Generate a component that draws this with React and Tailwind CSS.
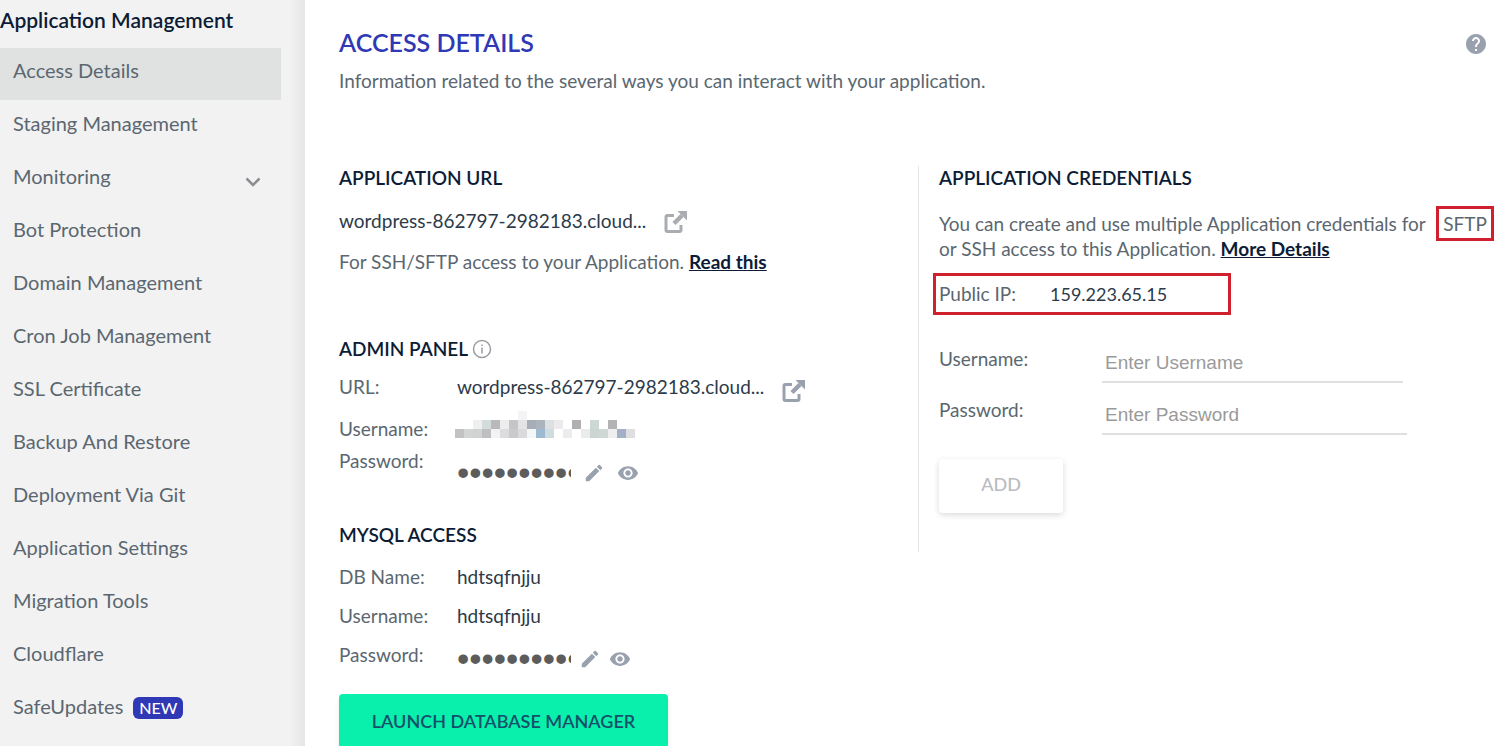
import React, { useState } from 'react';
import { MdEdit, MdRemoveRedEye, MdHelp } from 'react-icons/md';

const navLinks = [
  { name: 'Access Details', active: true },
  { name: 'Staging Management' },
  { name: 'Monitoring', expandable: true },
  { name: 'Bot Protection' },
  { name: 'Domain Management' },
  { name: 'Cron Job Management' },
  { name: 'SSL Certificate' },
  { name: 'Backup And Restore' },
  { name: 'Deployment Via Git' },
  { name: 'Application Settings' },
  { name: 'Migration Tools' },
  { name: 'Cloudflare' },
  { name: 'SafeUpdates', badge: 'NEW' },
];

// Censored username, one colour per cell
const mosaic = [
  ['', '', '', '', '', '', '', '#f4f4f4'],
  ['', '', '#eef0f0', '#d3dbdb', '#b9b9bb', '#ededee', '#c5c5c8', '#e3e3e5', '#a7adb6', '#a9b4bd', '#dedfe2', '#ebebed', '', '#b0b0b3', '', '#ccd8d3', '', '#b3b3b6'],
  ['#c2c2c4', '#d2d5d4', '#cfd4d2', '#bfbfc1', '#f2f2f2', '#dcdcde', '#cacacc', '#dadadc', '#f3f5f7', '#9dbbd0', '#cfdcdd', '', '#ececee', '', '#ebebed', '#cbd6d1', '#cfd8d4', '#eeeeef', '#a3afc4', '#dfdfe1'],
];

const Mosaic = () => (
  <svg width="180" height="27" viewBox="0 0 180 27" shapeRendering="crispEdges" role="img" aria-label="Hidden username">
    {mosaic.map((row, y) =>
      row.map((fill, x) => fill && <rect key={`${x}-${y}`} x={x * 9} y={y * 9} width="9" height="9" fill={fill} />)
    )}
  </svg>
);

const OpenIcon = () => (
  <svg width="24" height="24" viewBox="0 0 24 24" fill="none" aria-hidden="true">
    <path d="M11 5.500H4.500Q3 5.500 3 7V20Q3 21.500 4.500 21.500H16.500Q18 21.500 18 20V15" stroke="currentColor" strokeWidth="3" />
    <path d="M11 13.500L19 5.500" stroke="currentColor" strokeWidth="4.500" />
    <path d="M14.500 1H24V10.500Z" fill="currentColor" />
  </svg>
);

const InfoIcon = () => (
  <svg width="20" height="20" viewBox="0 0 20 20" fill="none" stroke="currentColor" aria-hidden="true">
    <circle cx="10" cy="10" r="8.500" strokeWidth="1.500" />
    <path d="M10 8.500V14.500M10 5.500V7" strokeWidth="1.500" />
  </svg>
);

const Chevron = () => (
  <svg width="16" height="10" viewBox="0 0 16 10" fill="none" stroke="#8a8d91" strokeWidth="2.500" className="mt-3 mr-5 ml-auto" aria-hidden="true">
    <path d="M1.500 1.500L8 8L14.500 1.500" />
  </svg>
);

const SectionTitle = ({ children }) => (
  <h2 className="flex h-6 items-center gap-1 text-[19px] font-semibold text-[#0c1c36]">{children}</h2>
);

const Row = ({ label, className, children }) => (
  <div className={`flex ${className}`}>
    <dt className="w-[118px] shrink-0">{label}</dt>
    <dd className="flex text-[#2c3a4a]">{children}</dd>
  </div>
);

const SecretValue = ({ label, className }) => {
  const [visible, setVisible] = useState(false);

  return (
    <div className={`flex h-6 items-center text-[#9aa1ae] ${className}`}>
      <input
        type={visible ? 'text' : 'password'}
        aria-label={label}
        defaultValue="aqwsedrftgyh"
        readOnly
        className={`h-6 w-[114px] font-['Liberation_Sans',Arial,sans-serif] text-[#5c5c5c] outline-none ${visible ? 'text-lg' : 'text-[35px]'}`}
      />
      <button type="button" aria-label={`Edit ${label}`}>
        <MdEdit size={22} />
      </button>
      <button type="button" aria-label={`Show ${label}`} onClick={() => setVisible(!visible)}>
        <MdRemoveRedEye size={22} />
      </button>
    </div>
  );
};

const Sidebar = () => (
  <aside className="flex w-[305px] shrink-0 flex-col bg-gradient-to-r from-[#f2f2f2] from-95% to-[#e6e6e6] pt-2 text-xl leading-6">
    <h2 className="text-[21px] leading-6 font-semibold text-[#0c1c36]">Application Management</h2>
    <nav className="mt-4 mr-6 flex flex-col gap-px">
      {navLinks.map((link) => (
        <a
          key={link.name}
          href="#"
          className={`flex h-[52px] items-center pb-2 pl-[13px] ${link.active ? 'bg-[#dfe2e1]' : ''}`}
        >
          {link.name}
          {link.badge && (
            <span className="mt-1 ml-2.5 rounded-md bg-[#2f38b5] px-1.5 text-base leading-[22px] font-medium text-white">
              {link.badge}
            </span>
          )}
          {link.expandable && <Chevron />}
        </a>
      ))}
    </nav>
  </aside>
);

const Credentials = () => (
  <section className="h-[386px] border-l border-[#e4e6e8] pl-5">
    <SectionTitle>APPLICATION CREDENTIALS</SectionTitle>
    <p className="mt-[21px] leading-[25px]">
      You can create and use multiple Application credentials for{' '}
      <span className="ml-1.5 border-3 border-[#d0202e] px-1 py-[3px]">SFTP</span>{' '}
      or SSH access to this Application.{' '}
      <a href="#" className="font-bold text-[#0c1c36] underline">More Details</a>
    </p>
    <div className="mt-3 -ml-[6px] flex h-[42px] w-[298px] items-center border-3 border-[#d0202e] pl-[3px]">
      <span className="w-[111px]">Public IP:</span>
      <span className="text-lg leading-6 text-[#2c3a4a]">159.223.65.15</span>
    </div>
    <form>
      <div className="mt-6 flex">
        <label htmlFor="username" className="mt-2 w-[163px] shrink-0">Username:</label>
        <input
          id="username"
          placeholder="Enter Username"
          className="h-11 w-[301px] border-b-2 border-[#e0e0e0] px-[3px] pt-1.5 font-['Liberation_Sans',Arial,sans-serif] outline-none placeholder:text-[#9a9a9a]"
        />
      </div>
      <div className="mt-2 flex">
        <label htmlFor="password" className="mt-[7px] w-[163px] shrink-0">Password:</label>
        <input
          id="password"
          type="password"
          placeholder="Enter Password"
          className="h-11 w-[305px] border-b-2 border-[#e0e0e0] px-[3px] pt-1.5 font-['Liberation_Sans',Arial,sans-serif] outline-none placeholder:text-[#9a9a9a]"
        />
      </div>
      <button type="submit" disabled className="mt-6 h-[54px] w-[124px] rounded-sm pb-1 text-lg font-medium text-[#b9bbc1] shadow-[0_2px_6px_rgba(0,0,0,0.15)]">
        ADD
      </button>
    </form>
  </section>
);

const App = () => (
  <div className="flex h-screen overflow-hidden bg-white font-[Lato,sans-serif] text-[19px] leading-6 text-[#5b6770]">
    <Sidebar />
    <main className="min-w-0 flex-1 pt-[27px] pr-[3px] pl-[34px]">
      <header className="flex items-start justify-between">
        <div>
          <h1 className="text-[25px] leading-[30px] font-semibold text-[#2f38b5]">ACCESS DETAILS</h1>
          <p className="mt-3">Information related to the several ways you can interact with your application.</p>
        </div>
        <button type="button" aria-label="Help" className="mt-[5px] mr-[9px] text-[#9aa1ae]">
          <MdHelp size={24} />
        </button>
      </header>

      <div className="mt-[73px] grid grid-cols-2 items-start">
        <div>
          <section>
            <SectionTitle>APPLICATION URL</SectionTitle>
            <div className="mt-[19px] flex">
              <span className="text-[#2c3a4a]">wordpress-862797-2982183.cloud...</span>
              <a href="#" aria-label="Open application" className="mt-px ml-[17px] text-[#a9acb0]"><OpenIcon /></a>
            </div>
            <p className="mt-4">
              For SSH/SFTP access to your Application.{' '}
              <a href="#" className="font-bold text-[#0c1c36] underline">Read this</a>
            </p>
          </section>

          <section className="mt-[63px]">
            <SectionTitle>
              ADMIN PANEL
              <span className="text-[#9a9da3]"><InfoIcon /></span>
            </SectionTitle>
            <dl>
              <Row label="URL:" className="mt-[14px] h-7">
                <span>wordpress-862797-2982183.cloud...</span>
                <a href="#" aria-label="Open admin panel" className="mt-1 ml-[17px] text-[#9aa1ae]"><OpenIcon /></a>
              </Row>
              <Row label="Username:" className="mt-[14px] h-8">
                <div className="-mt-1.5 -ml-0.5"><Mosaic /></div>
              </Row>
              <Row label="Password:" className="h-9">
                <SecretValue label="admin password" className="mt-3 gap-3" />
              </Row>
            </dl>
          </section>

          <section className="mt-[38px]">
            <SectionTitle>MYSQL ACCESS</SectionTitle>
            <dl className="mt-[18px] flex flex-col gap-[15px]">
              <Row label="DB Name:">hdtsqfnjju</Row>
              <Row label="Username:">hdtsqfnjju</Row>
              <Row label="Password:">
                <SecretValue label="database password" className="mt-1 gap-2" />
              </Row>
            </dl>
            <button type="button" className="mt-[23px] h-[54px] w-[329px] rounded-sm bg-[#08f0ac] text-lg font-semibold text-[#14506a] shadow-md">
              LAUNCH DATABASE MANAGER
            </button>
          </section>
        </div>

        <Credentials />
      </div>
    </main>
  </div>
);

export default App;
